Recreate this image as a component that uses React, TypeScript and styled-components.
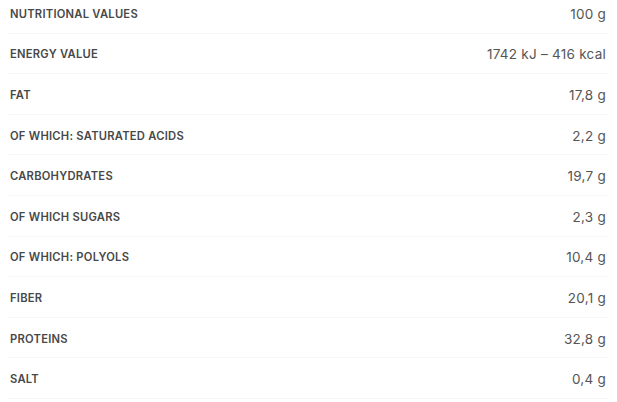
import React from "react";
import styled, { createGlobalStyle } from "styled-components";

const GlobalStyle = createGlobalStyle`
  body {
    margin: 0;
    background: #ffffff;
    font-family: Inter, "Open Sans", sans-serif;
    overflow: hidden;
  }
`;

const Table = styled.div`
  display: flex;
  flex-direction: column;
  margin: -7px 9px 0 8px;
`;

const Row = styled.div`
  display: flex;
  justify-content: space-between;
  align-items: center;
  box-sizing: border-box;
  height: 40.6px;
  padding: 2px 2px 0;
  border-bottom: 1px solid #f6f6f6;
`;

const Label = styled.span`
  font-size: 11.2px;
  font-weight: 600;
  color: #484848;
  text-transform: uppercase;
  letter-spacing: 0.25px;
`;

const Value = styled.span`
  font-size: 13.5px;
  font-weight: 400;
  color: #555555;
  letter-spacing: 0.25px;
`;

const rows = [
  ["Nutritional values", "100 g"],
  ["Energy value", "1742 kJ – 416 kcal"],
  ["Fat", "17,8 g"],
  ["Of which: saturated acids", "2,2 g"],
  ["Carbohydrates", "19,7 g"],
  ["Of which sugars", "2,3 g"],
  ["Of which: polyols", "10,4 g"],
  ["Fiber", "20,1 g"],
  ["Proteins", "32,8 g"],
  ["Salt", "0,4 g"],
];

function App() {
  return (
    <>
      <GlobalStyle />
      <Table>
        {rows.map(([label, value]) => (
          <Row key={label}>
            <Label>{label}</Label>
            <Value>{value}</Value>
          </Row>
        ))}
      </Table>
    </>
  );
}

export default App;
